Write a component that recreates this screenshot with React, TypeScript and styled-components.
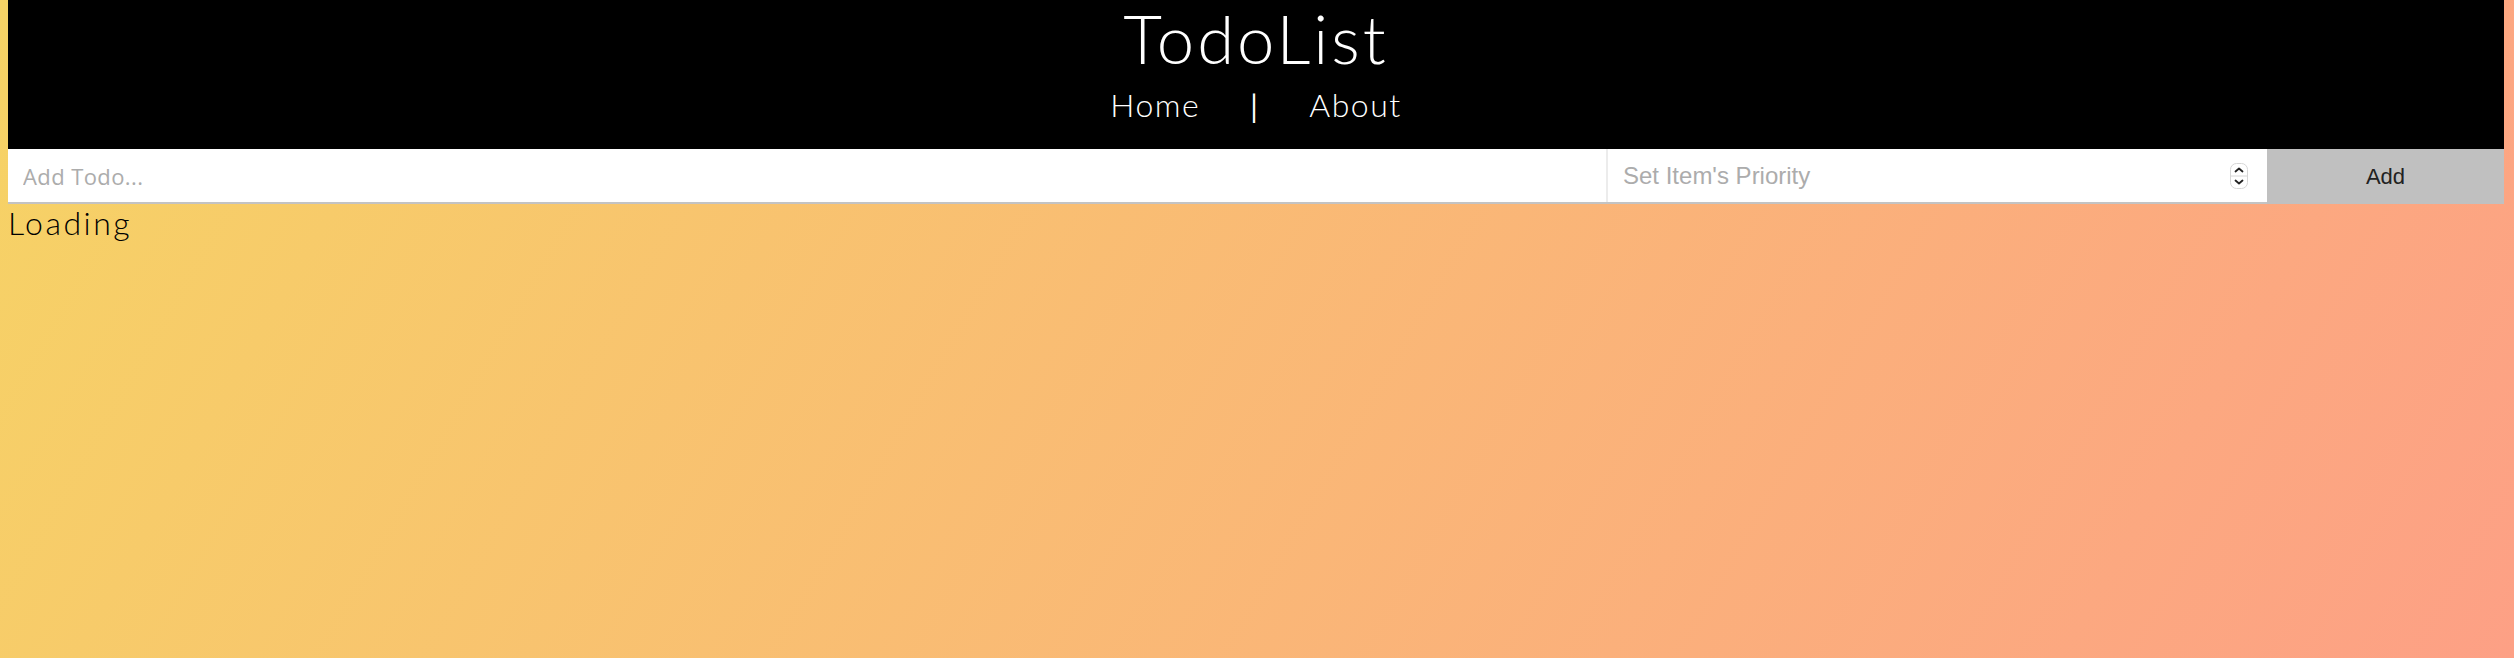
import React from "react";
import styled, { createGlobalStyle } from "styled-components";

const Global = createGlobalStyle`
  html { height: 100%; }
  html, body { margin: 0; padding: 0; }
  body {
    min-height: 100%;
    background: linear-gradient(120deg, #f6d365 0%, #fda085 100%);
    background-attachment: fixed;
    font-family: Lato, "Liberation Sans", sans-serif;
  }
`;

const Page = styled.div`
  padding: 0 10px 0 8px;
`;

const Header = styled.header`
  background: #000;
  color: #fff;
  height: 149px;
  display: flex;
  flex-direction: column;
  align-items: center;
  font-family: Lato, Inter, "Liberation Sans", sans-serif;
  font-weight: 300;
`;

const Title = styled.h1`
  margin: 0;
  padding-top: 2px;
  font-size: 67px;
  font-weight: 300;
  line-height: 72px;
  letter-spacing: 3px;
`;

const Nav = styled.nav`
  display: flex;
  align-items: center;
  gap: 50px;
  margin-top: 11px;
  font-size: 32px;
  font-weight: 300;
  line-height: 40px;
  letter-spacing: 1.5px;
`;

const NavLink = styled.a`
  color: #fff;
  text-decoration: none;
`;

const Sep = styled.span`
  color: #fff;
  font-size: 30px;
  font-weight: 400;
  line-height: 1;
  margin-top: 2px;
`;

const Form = styled.form`
  display: flex;
  height: 53px;
  border-bottom: 2px solid #c3c3c3;
  background: #fff;
`;

const TextInput = styled.input`
  flex: 0 0 1600px;
  box-sizing: border-box;
  border: none;
  border-right: 2px solid #ececec;
  outline: none;
  padding: 0 15px;
  font-family: "Open Sans", sans-serif;
  font-size: 22px;
  letter-spacing: 0.4px;
  background: #fff;
  &::placeholder { color: #acacac; }
`;

const PriorityWrap = styled.div`
  position: relative;
  flex: 1 1 auto;
  display: flex;
`;

const PriorityInput = styled.input`
  flex: 1;
  box-sizing: border-box;
  border: none;
  outline: none;
  padding: 0 15px;
  font-family: "Liberation Sans", Arial, sans-serif;
  font-size: 24px;
  background: #fff;
  &::placeholder { color: #acacac; }
  &::-webkit-inner-spin-button, &::-webkit-outer-spin-button { -webkit-appearance: none; margin: 0; }
`;

const Spinner = styled.svg`
  position: absolute;
  right: 19px;
  top: 14px;
  pointer-events: none;
`;

const AddButton = styled.button`
  flex: 0 0 237px;
  border: none;
  background: #c0c0c0;
  color: #222;
  font-family: "Liberation Sans", Arial, sans-serif;
  font-size: 22px;
  margin-bottom: -2px;
  cursor: pointer;
`;

const Loading = styled.div`
  margin-top: 1px;
  font-family: Lato, Inter, "Liberation Sans", sans-serif;
  font-weight: 300;
  font-size: 32px;
  line-height: 36px;
  letter-spacing: 2.5px;
  color: #000;
`;

export default function App() {
  return (
    <Page>
      <Global />
      <Header>
        <Title>TodoList</Title>
        <Nav>
          <NavLink href="#">Home</NavLink>
          <Sep>|</Sep>
          <NavLink href="#">About</NavLink>
        </Nav>
      </Header>
      <Form onSubmit={(e) => e.preventDefault()}>
        <TextInput type="text" placeholder="Add Todo..." />
        <PriorityWrap>
          <PriorityInput type="number" placeholder="Set Item's Priority" />
          <Spinner width="18" height="26" viewBox="0 0 18 26">
            <rect x="0.5" y="0.5" width="17" height="25" rx="6" fill="#fff" stroke="#d6d6d6" />
            <line x1="1" y1="13" x2="17" y2="13" stroke="#d6d6d6" />
            <path d="M5.5 8.5 L9 5.5 L12.5 8.5" fill="none" stroke="#222" strokeWidth="1.8" strokeLinecap="round" strokeLinejoin="round" />
            <path d="M5.5 17.5 L9 20.5 L12.5 17.5" fill="none" stroke="#222" strokeWidth="1.8" strokeLinecap="round" strokeLinejoin="round" />
          </Spinner>
        </PriorityWrap>
        <AddButton type="submit">Add</AddButton>
      </Form>
      <Loading>Loading</Loading>
    </Page>
  );
}
